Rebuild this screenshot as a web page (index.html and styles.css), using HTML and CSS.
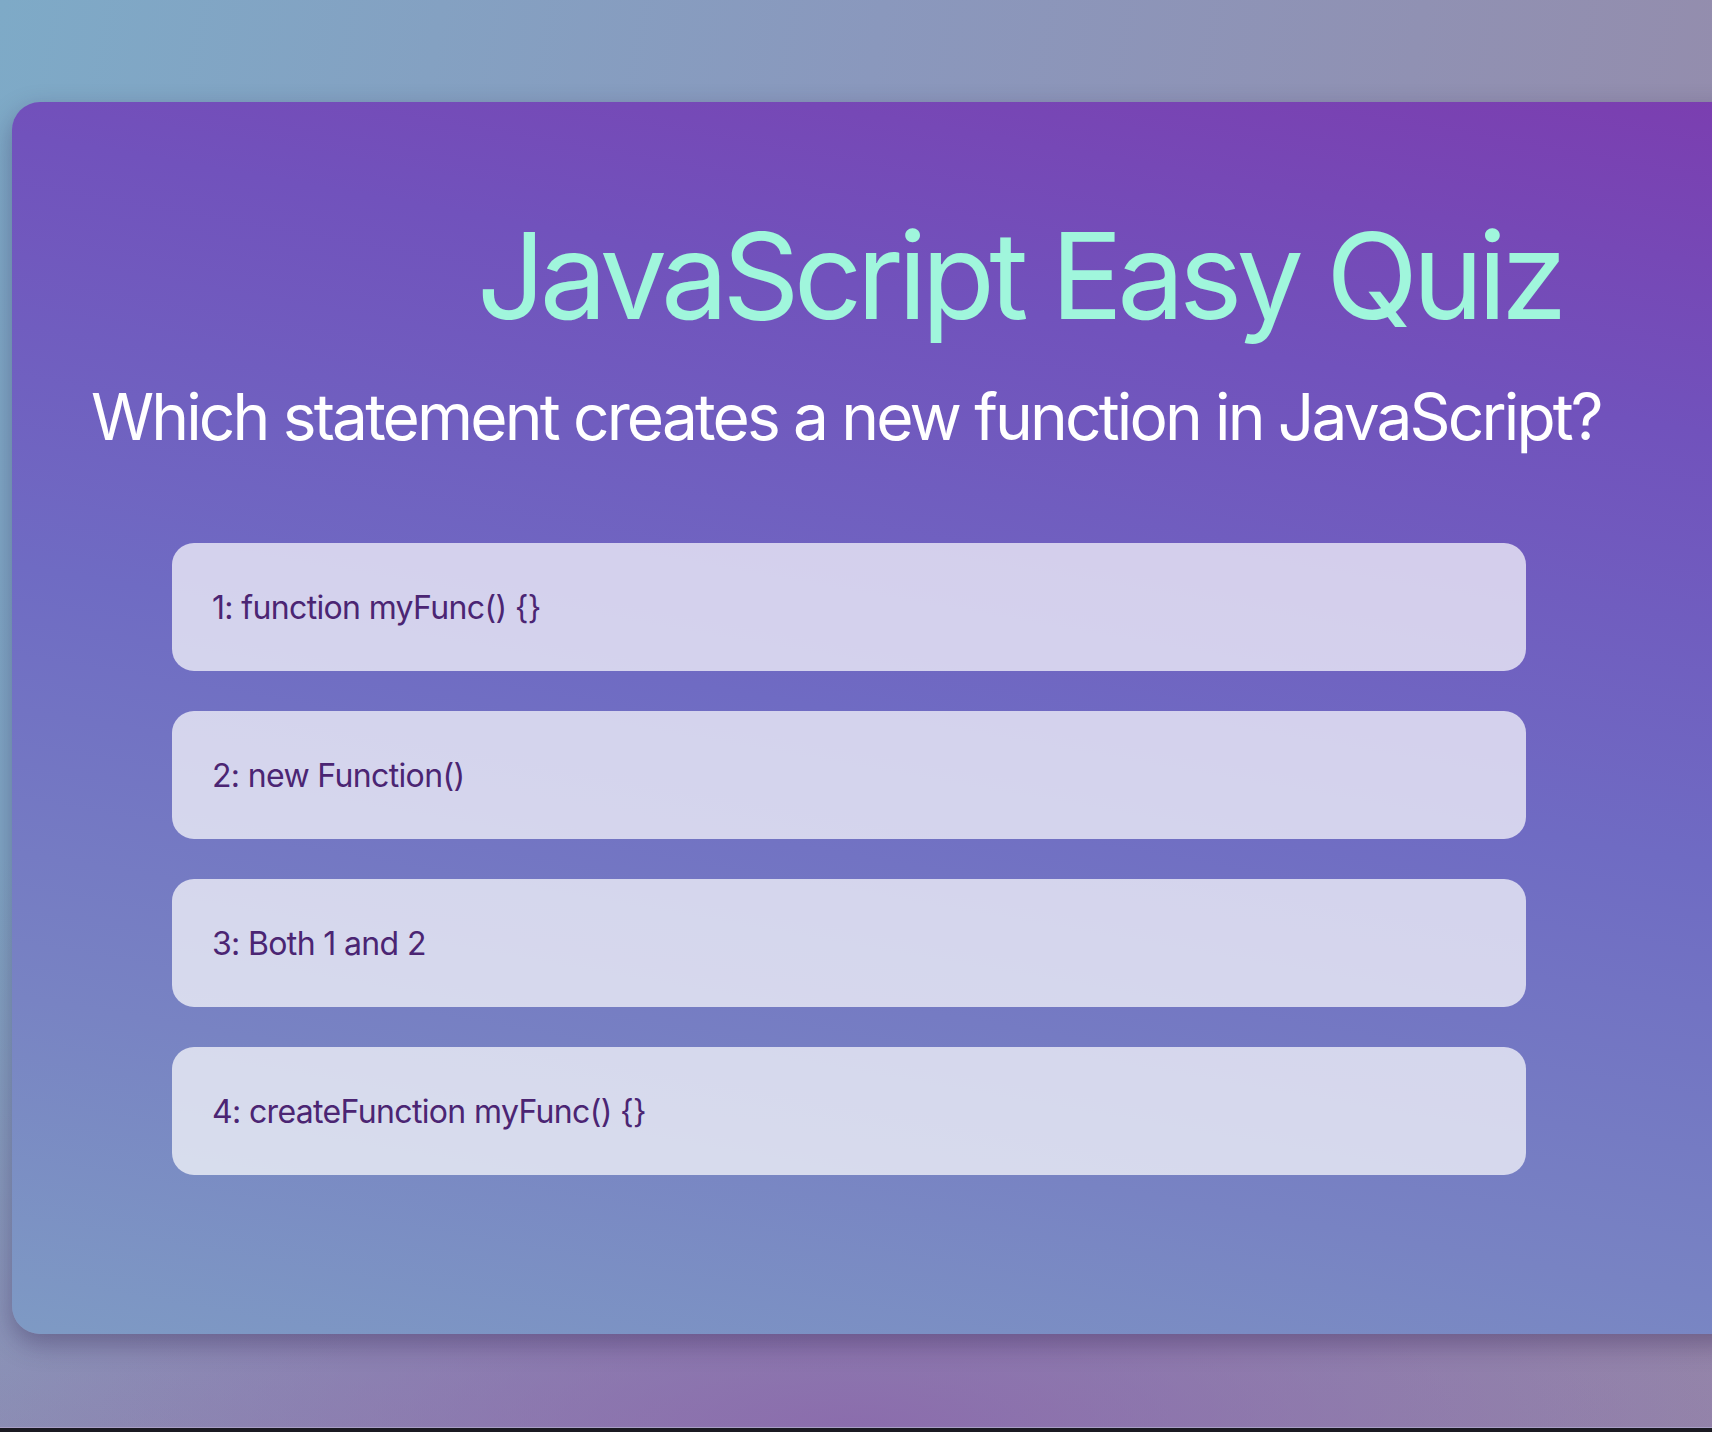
FILE: index.html
```html
<!DOCTYPE html>
<html lang="en">
<head>
<meta charset="utf-8">
<title>JavaScript Easy Quiz</title>
<link rel="stylesheet" href="styles.css">
</head>
<body>
  <main class="card">
    <h1 class="title">JavaScript Easy Quiz</h1>
    <h2 class="question">Which statement creates a new function in JavaScript?</h2>
    <div class="options">
      <button class="option">1: function myFunc() {}</button>
      <button class="option">2: new Function()</button>
      <button class="option">3: Both 1 and 2</button>
      <button class="option">4: createFunction myFunc() {}</button>
    </div>
  </main>
</body>
</html>
```

FILE: styles.css
```css
html {
  margin: 0;
  padding: 0;
  background: #1b1a22;
  height: 1432px;
  overflow: hidden;
}

body {
  margin: 0;
  height: 1427px;
  border-bottom: 1px solid #a99fc6;
  overflow: hidden;
  font-family: Inter, "Noto Sans", sans-serif;
  background:
    radial-gradient(ellipse 900px 260px at 50% 100%, rgba(138, 104, 172, 0.85), rgba(138, 104, 172, 0) 100%),
    linear-gradient(180deg, rgba(0, 0, 0, 0) 60%, rgba(146, 128, 170, 0.6) 100%),
    linear-gradient(100deg, #7eaac7 0%, #8a98bd 45%, #968aa9 100%);
  display: flow-root;
}

.card {
  margin: 102px 0 0 12px;
  width: 1740px;
  height: 1232px;
  box-sizing: border-box;
  border-radius: 28px;
  padding-top: 114px;
  background: linear-gradient(190deg, #7b3eb0 0%, #7152bc 22%, #6f6bc3 50%, #7883c3 78%, #7e9ac4 100%);
  box-shadow: 0 10px 26px rgba(40, 20, 70, 0.35);
}

.title {
  margin: 0 0 49px 465px;
  font-size: 120px;
  line-height: 120px;
  height: 120px;
  font-weight: 400;
  letter-spacing: -5.7px;
  color: #a0f6dc;
  white-space: nowrap;
}

.question {
  margin: 0 0 94px 79px;
  font-size: 64px;
  line-height: 64px;
  height: 64px;
  font-weight: 400;
  letter-spacing: -2.85px;
  color: #ffffff;
  white-space: nowrap;
}

.options {
  margin-left: 160px;
  width: 1354px;
  display: flex;
  flex-direction: column;
  gap: 40px;
}

.option {
  display: flex;
  align-items: center;
  height: 128px;
  box-sizing: border-box;
  padding: 0 0 0 40px;
  border: none;
  border-radius: 22px;
  background: rgba(255, 255, 255, 0.7);
  font-family: Inter, "Noto Sans", sans-serif;
  font-size: 32px;
  font-weight: 400;
  letter-spacing: -0.65px;
  color: #4b2573;
  text-align: left;
  cursor: pointer;
}
```
